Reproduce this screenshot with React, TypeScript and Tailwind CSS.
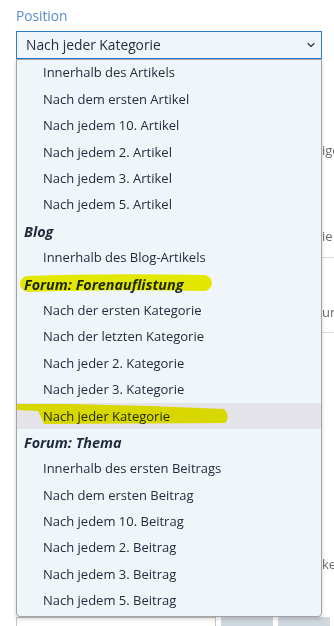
import { ChevronDown } from "lucide-react"

type Row = { label: string; group?: boolean; active?: boolean }

const rows: Row[] = [
  { label: "Innerhalb des Artikels" },
  { label: "Nach dem ersten Artikel" },
  { label: "Nach jedem 10. Artikel" },
  { label: "Nach jedem 2. Artikel" },
  { label: "Nach jedem 3. Artikel" },
  { label: "Nach jedem 5. Artikel" },
  { label: "Blog", group: true },
  { label: "Innerhalb des Blog-Artikels" },
  { label: "Forum: Forenauflistung", group: true },
  { label: "Nach der ersten Kategorie" },
  { label: "Nach der letzten Kategorie" },
  { label: "Nach jeder 2. Kategorie" },
  { label: "Nach jeder 3. Kategorie" },
  { label: "Nach jeder Kategorie", active: true },
  { label: "Forum: Thema", group: true },
  { label: "Innerhalb des ersten Beitrags" },
  { label: "Nach dem ersten Beitrag" },
  { label: "Nach jedem 10. Beitrag" },
  { label: "Nach jedem 2. Beitrag" },
  { label: "Nach jedem 3. Beitrag" },
  { label: "Nach jedem 5. Beitrag" },
]

// bits of the form that peek out from under the open list
const Peek = ({ text }: { text: string }) => (
  <div className="h-[18px] pl-[322px] whitespace-nowrap text-[13px] leading-[18px] text-[#6b6b6b]">{text}</div>
)

const App = () => {
  return (
    <div
      className="relative w-[334px] h-[626px] overflow-hidden bg-white"
      style={{ fontFamily: '"Open Sans", "Noto Sans", sans-serif' }}
    >
      <div className="flex flex-col pt-[6px] pl-[16px]">
        <div className="h-[20px] text-[13.7px] leading-[20px] text-[#5a8ccc]">Position</div>
        <div className="mt-[5px] w-[306px] h-[28px] flex items-center justify-between pl-[9px] pr-[4px] border border-[#2b7bc6] bg-[#f0f5fa] text-[13.8px] text-[#252e3f]">
          <span>Nach jeder Kategorie</span>
          <ChevronDown size={12} strokeWidth={2.2} className="text-[#2b3445]" />
        </div>
      </div>

      {/* form behind the list */}
      <div className="flex flex-col">
        <div className="h-[82px]" />
        <Peek text="ige" />
        <div className="h-[68px]" />
        <Peek text="ie" />
        <div className="h-[12px]" />
        <div className="ml-[16px] border-t border-[#dddddd]" />
        <div className="h-[45px]" />
        <Peek text="un" />
        <div className="h-[11px]" />
        <div className="ml-[16px] border-t border-[#dddddd]" />
        <div className="h-[222px]" />
        <Peek text="ke" />
        <div className="h-[44px]" />
        <div className="flex h-[20px] pl-[16px]">
          <div className="w-[200px] border border-[#c8c8c8] bg-white" />
          <div className="ml-[5px] w-[52px] bg-[#cfd7df]" />
          <div className="ml-[5px] w-[52px] bg-[#cfd7df]" />
        </div>
      </div>

      {/* open option list */}
      <div className="absolute top-[59px] left-[16px] w-[306px] pb-[2px] bg-[#f0f5fa] border border-[#a3a3a3] rounded-b-[4px] shadow-[0_2px_4px_rgba(0,0,0,0.18)]">
        {rows.map((r, i) => (
          <div
            key={i}
            className={`h-[26.4px] flex items-center whitespace-nowrap ${
              r.group
                ? "pl-[7px] font-bold italic text-[14.4px] text-[#1f2a3b]"
                : "pl-[26px] text-[13px] text-[#232c3e]"
            } ${r.active ? "bg-[#e4e3e9]" : ""}`}
          >
            {r.label}
          </div>
        ))}
      </div>

      {/* highlighter marks */}
      <svg
        className="absolute top-0 left-0 pointer-events-none mix-blend-multiply"
        width="334"
        height="626"
        viewBox="0 0 334 626"
      >
        <path
          d="M28 284 C 80 282, 150 282, 204 283"
          stroke="#f2f200"
          strokeWidth="16"
          strokeLinecap="round"
          fill="none"
        />
        <path
          d="M17 404 L70 404 L150 406 L224 409 Q231 416 225 423 L44 424 Q41 417 38 411 L17 410 Z"
          fill="#f2f200"
        />
      </svg>
    </div>
  )
}

export default App
